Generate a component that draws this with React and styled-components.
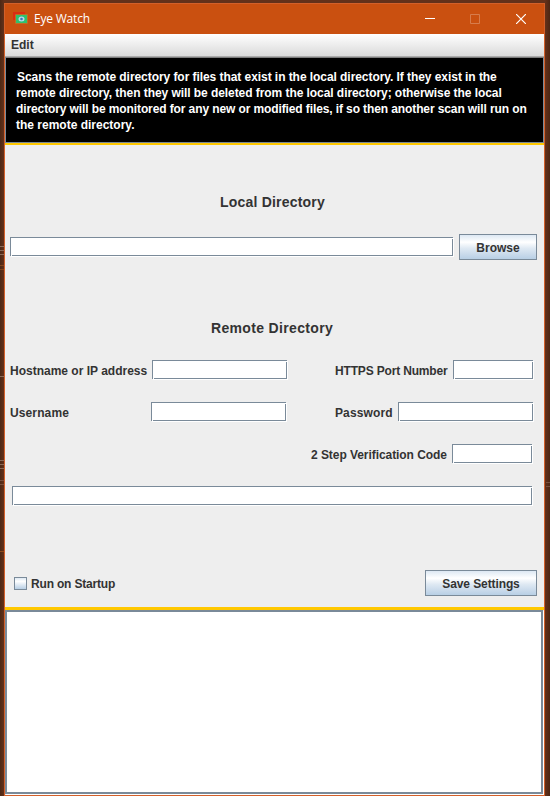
import React from 'react';
import styled, { createGlobalStyle } from 'styled-components';

const Global = createGlobalStyle`
  * { box-sizing: border-box; }
  body { margin: 0; overflow: hidden; background: #562a16; }
`;
const Desktop = styled.div`
  position: relative; width: 550px; height: 796px; padding: 3px 5px 0 4px;
  background: linear-gradient(90deg, #4c2815 0, #64311a 4px, #64311a 545px, #4c2613 550px);
  font: bold 12px/16px "Liberation Sans", Arial, sans-serif; color: #333;
`;
const Behind = styled.span`
  position: absolute; top: ${p => p.$y}px; width: 4px; height: ${p => p.$h}px;
  ${p => (p.$right ? 'right: 0;' : 'left: 0;')}
  background: repeating-linear-gradient(${p => p.$c || '#8a6a58'} 0 1px, transparent 1px 4px);
`;
const Window = styled.main`
  display: flex; flex-direction: column; height: 793px;
  border: 1px solid #d3602a; background: #eee;
`;
const TitleBar = styled.header`
  display: flex; align-items: center; height: 30px; flex: none; background: #ca5010; color: #fff;
  padding-left: 8px;
`;
const Title = styled.span`
  font: 12px/16px "Open Sans", sans-serif; letter-spacing: ${p => p.$ls}px; margin-left: 5px; flex: 1;
`;
const Controls = styled.div`display: flex;`;
const Control = styled.div`
  width: 46px; height: 30px; display: grid; place-items: center; opacity: ${p => (p.$dim ? 0.25 : 1)};
`;
const MenuBar = styled.nav`
  height: 23px; flex: none; padding: 3px 6px; color: #333;
  background: linear-gradient(#fff, #dadada); border-bottom: 1px solid #aaa;
`;
const Description = styled.p`
  margin: 0; height: 86px; flex: none; padding: 11px 0 0 10px; background: #000; color: #fff;
  border: 1px solid #7a8a99; border-top-color: #7c7c7c;
`;
const Line = styled.span`
  display: block; white-space: nowrap; letter-spacing: ${p => p.$ls || 0}px; padding-left: ${p => p.$indent || 0}px;
`;
const Rule = styled.div`height: ${p => p.$h}px; flex: none; background: #ffc800;`;
const Form = styled.section`height: 462px; flex: none; display: flex; flex-direction: column;`;
const Heading = styled.h2`
  margin: ${p => p.$top}px 0 0; padding-left: ${p => p.$left}px; font-size: 14px; line-height: 18px;
  letter-spacing: ${p => p.$ls || 0}px;
`;
const Row = styled.div`
  display: flex; align-items: center; height: ${p => p.$h || 20}px;
  margin: ${p => p.$top}px ${p => p.$right || 0}px 0 ${p => p.$left || 0}px;
`;
const Spacer = styled.div`flex: 1;`;
const Label = styled.label`
  white-space: nowrap; letter-spacing: ${p => p.$ls || 0}px; width: ${p => p.$w}px; flex: none;
  padding-top: 2px;
`;
const edge = 'linear-gradient(#7a8a99, #7a8a99)';
const notch = 'linear-gradient(#fff, #fff)';
const Field = styled.div`
  width: ${p => p.$w}px; height: 19px; flex: none; box-shadow: 1px 1px #fff; margin-bottom: 1px;
  background:
    ${notch} 1px 18px / 1px 1px no-repeat,
    ${notch} 100% 1px / 1px 1px no-repeat,
    ${edge} 0 0 / 100% 1px no-repeat,
    ${edge} 0 100% / 100% 1px no-repeat,
    ${edge} 0 0 / 1px 100% no-repeat,
    ${edge} 100% 0 / 1px 100% no-repeat,
    #fff;
`;
const Button = styled.button`
  width: ${p => p.$w}px; height: 26px; padding: 2px 0 0; border: 1px solid #7a8a99; border-radius: 0;
  font: inherit; color: #333; letter-spacing: ${p => p.$ls || 0}px;
  background: linear-gradient(#dde8f3 0%, #fff 30%, #dfe9f3 55%, #b8cfe5 100%);
`;
const Check = styled.div`
  width: 13px; height: 13px; border: 1px solid #7a8a99; margin-right: 4px;
  background: linear-gradient(#dde8f3 0%, #fff 30%, #b8cfe5 100%);
`;
const Log = styled.div`
  flex: 1; border: 2px solid #7a8a99; box-shadow: 1px 1px #fff; background: #fff; margin: 0 1px 1px 0;
`;

const AppIcon = () => (
  <svg width="16" height="16" viewBox="0 0 16 16">
    <path d="M0 1h12v8H0z" fill="#dc2d12" />
    <path d="M2.500 3.500h12v9h-12z" fill="#2fc26e" stroke="#cf6a20" strokeWidth=".8" />
    <ellipse cx="8.500" cy="8" rx="3" ry="2.500" fill="#b8d8ee" />
    <circle cx="8.500" cy="8" r="1.300" fill="#3a78b8" />
  </svg>
);

export default function App() {
  return (
    <Desktop>
      <Global />
      <Behind $y={246} $h={9} />
      <Behind $y={265} $h={5} $c="#84451c" />
      <Behind $y={376} $h={1} />
      <Behind $y={460} $h={9} />
      <Behind $y={480} $h={7} $c="#79503e" />
      <Behind $y={551} $h={1} $c="#8f4a1c" />
      <Behind $y={482} $h={5} $right $c="#79503e" />
      <Window>
        <TitleBar>
          <AppIcon />
          <Title $ls={-0.2}>Eye Watch</Title>
          <Controls>
            <Control><svg width="12" height="10"><path d="M2 4.500h10" stroke="#fff" /></svg></Control>
            <Control $dim><svg width="10" height="10"><path d="M.5 .5h9v9h-9z" stroke="#fff" fill="none" /></svg></Control>
            <Control><svg width="10" height="10"><path d="M0 0l10 10M10 0L0 10" stroke="#fff" strokeWidth="1.200" /></svg></Control>
          </Controls>
        </TitleBar>
        <MenuBar>Edit</MenuBar>
        <Description>
          <Line $ls={-0.06} $indent={1}>Scans the remote directory for files that exist in the local directory. If they exist in the</Line>
          <Line $ls={-0.062}>remote directory, then they will be deleted from the local directory; otherwise the local</Line>
          <Line $ls={-0.107}>directory will be monitored for any new or modified files, if so then another scan will run on</Line>
          <Line>the remote directory.</Line>
        </Description>
        <Rule $h={2} />
        <Form>
          <Heading $top={48} $left={215} $ls={0.2}>Local Directory</Heading>
          <Row $top={23} $left={5} $right={7} $h={26}>
            <Field $w={443} /><Spacer /><Button $w={78}>Browse</Button>
          </Row>
          <Heading $top={59} $left={206} $ls={0.34}>Remote Directory</Heading>
          <Row $top={23} $left={5} $right={11}>
            <Label $w={142}>Hostname or IP address</Label><Field $w={135} /><Spacer />
            <Label $w={118} $ls={-0.17}>HTTPS Port Number</Label><Field $w={80} />
          </Row>
          <Row $top={22} $left={5} $right={11}>
            <Label $w={141} $ls={0.12}>Username</Label><Field $w={135} /><Spacer />
            <Label $w={63} $ls={0.12}>Password</Label><Field $w={135} />
          </Row>
          <Row $top={22} $right={12}>
            <Spacer /><Label $w={141} $ls={-0.06}>2 Step Verification Code</Label><Field $w={80} />
          </Row>
          <Row $top={22} $left={7}><Field $w={520} /></Row>
          <Row $top={64} $left={9} $right={7} $h={26}>
            <Check /><Label $w={100} $ls={-0.18}>Run on Startup</Label><Spacer /><Button $w={112} $ls={-0.1}>Save Settings</Button>
          </Row>
        </Form>
        <Rule $h={3} />
        <Log />
      </Window>
    </Desktop>
  );
}
